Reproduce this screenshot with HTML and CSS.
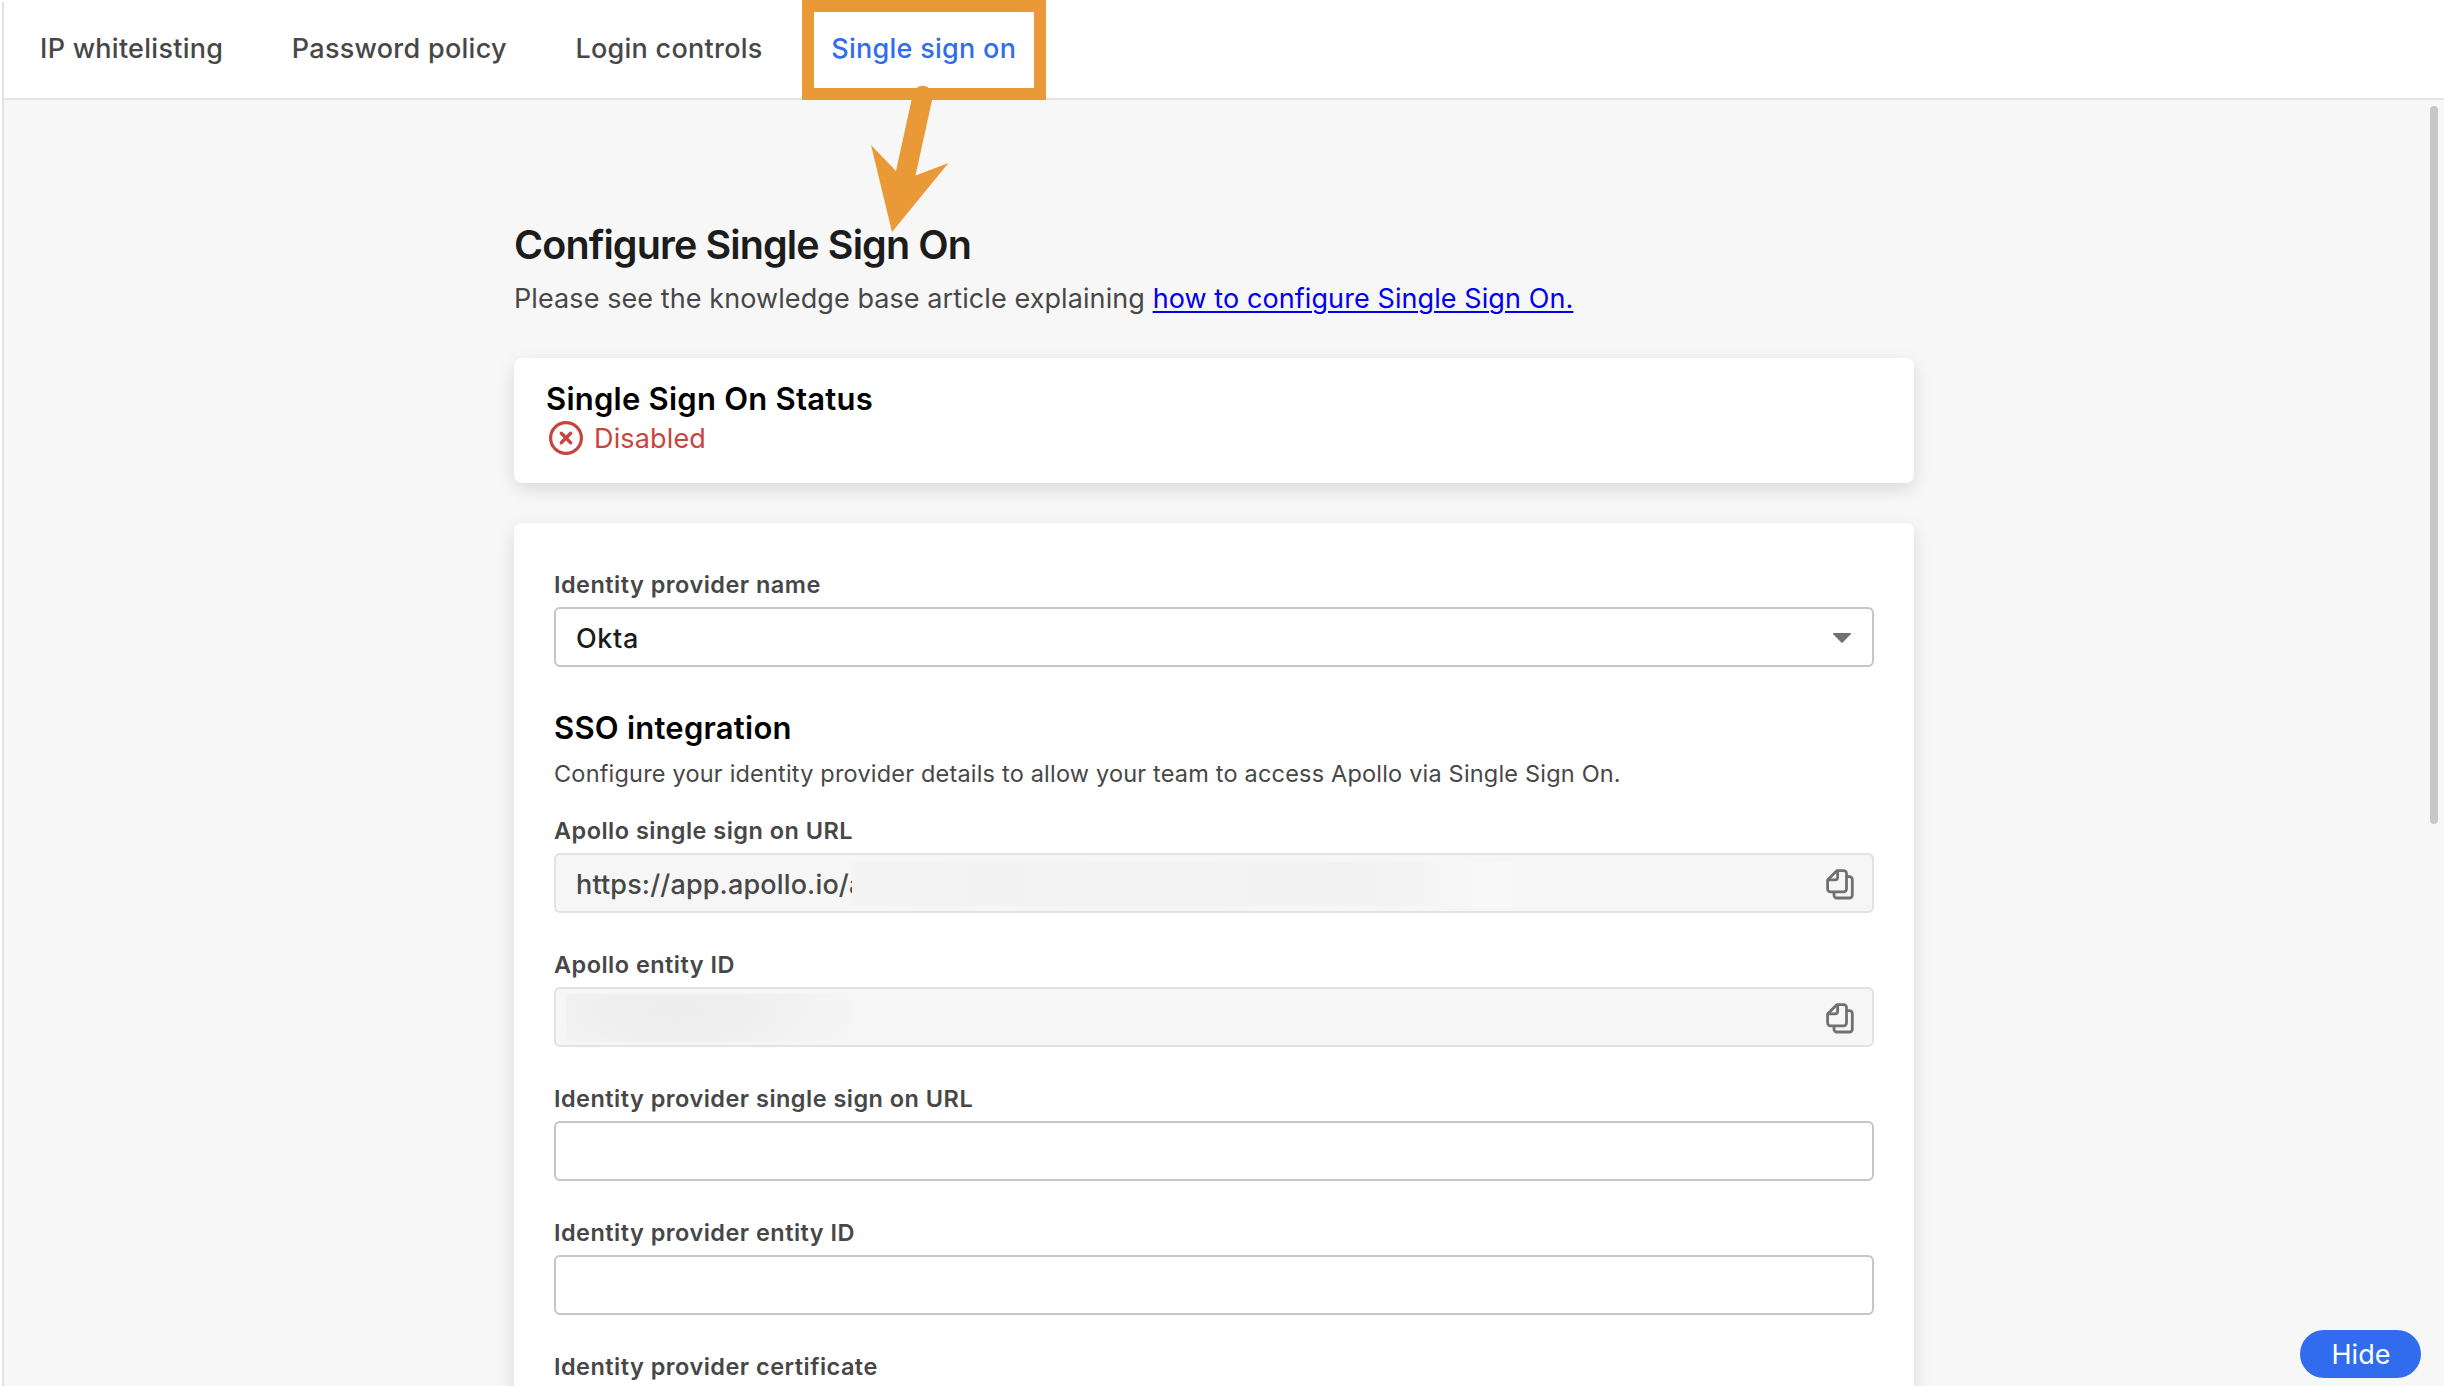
FILE: index.html
```html
<!DOCTYPE html>
<html lang="en">
<head>
    <meta charset="UTF-8">
    <meta name="viewport" content="width=device-width, initial-scale=1.0">
    <title>Single sign on</title>
    <link rel="stylesheet" href="styles.css">
</head>
<body>
    <div class="page">
        <nav class="tabs">
            <a class="tab">IP whitelisting</a>
            <a class="tab">Password policy</a>
            <a class="tab">Login controls</a>
            <a class="tab active">Single sign on</a>
        </nav>

        <main class="content">
            <h1>Configure Single Sign On</h1>
            <p class="intro">Please see the knowledge base article explaining <a href="#">how to configure Single Sign On.</a></p>

            <section class="card status-card">
                <h2>Single Sign On Status</h2>
                <div class="status">
                    <svg width="34" height="34" viewBox="0 0 34 34" fill="none" stroke="currentColor" stroke-linecap="round">
                        <circle cx="17" cy="17" r="15.4" stroke-width="3.2"/>
                        <path d="M12.3 12.3l9.4 9.4M21.7 12.3l-9.4 9.4" stroke-width="3.4"/>
                    </svg>
                    <span>Disabled</span>
                </div>
            </section>

            <section class="card form-card">
                <div class="field">
                    <label>Identity provider name</label>
                    <div class="input select">
                        <span>Okta</span>
                        <svg class="caret" width="18" height="10" viewBox="0 0 18 10"><path d="M0 0h18v1L10 9.3q-1 1-2 0L0 1z" fill="#717171"/></svg>
                    </div>
                </div>

                <h2 class="sso-title">SSO integration</h2>
                <p class="desc">Configure your identity provider details to allow your team to access Apollo via Single Sign On.</p>

                <div class="field">
                    <label>Apollo single sign on URL</label>
                    <div class="input readonly">
                        <span class="url">https://app.apollo.io/a</span>
                        <span class="redacted-url"></span>
                        <svg class="copy" width="28" height="31" viewBox="0 0 28 31" fill="none" stroke="#717171" stroke-width="2.8" stroke-linejoin="round">
                            <path d="M11 1.6h6.7a2.8 2.8 0 0 1 2.8 2.8v15.7a2.8 2.8 0 0 1-2.8 2.8H4.4a2.8 2.8 0 0 1-2.8-2.8V11z"/>
                            <path d="M11.6 1.6v6.7a2.5 2.5 0 0 1-2.5 2.5H1.6"/>
                            <path d="M20.5 7.6h3a2.8 2.8 0 0 1 2.8 2.8v15.8a2.8 2.8 0 0 1-2.8 2.8H10.8A2.8 2.8 0 0 1 8 26.2v-3.3"/>
                        </svg>
                    </div>
                </div>

                <div class="field">
                    <label>Apollo entity ID</label>
                    <div class="input readonly">
                        <span class="redacted-id"></span>
                        <svg class="copy" width="28" height="31" viewBox="0 0 28 31" fill="none" stroke="#717171" stroke-width="2.8" stroke-linejoin="round">
                            <path d="M11 1.6h6.7a2.8 2.8 0 0 1 2.8 2.8v15.7a2.8 2.8 0 0 1-2.8 2.8H4.4a2.8 2.8 0 0 1-2.8-2.8V11z"/>
                            <path d="M11.6 1.6v6.7a2.5 2.5 0 0 1-2.5 2.5H1.6"/>
                            <path d="M20.5 7.6h3a2.8 2.8 0 0 1 2.8 2.8v15.8a2.8 2.8 0 0 1-2.8 2.8H10.8A2.8 2.8 0 0 1 8 26.2v-3.3"/>
                        </svg>
                    </div>
                </div>

                <div class="field">
                    <label>Identity provider single sign on URL</label>
                    <div class="input"></div>
                </div>

                <div class="field">
                    <label>Identity provider entity ID</label>
                    <div class="input"></div>
                </div>

                <div class="field">
                    <label>Identity provider certificate</label>
                    <div class="input"></div>
                </div>
            </section>
        </main>
    </div>

    <!-- callout on the active tab -->
    <div class="highlight"></div>
    <svg class="arrow" width="80" height="150" viewBox="0 0 80 150">
        <path d="M42.4 14A10.3 10.3 0 0 1 63 14L45.5 93.5 78.5 81 22 150 1 63l25 26z" fill="#e99a36"/>
    </svg>

    <div class="scrollbar"></div>
    <button class="hide-btn">Hide</button>
</body>
</html>
```
FILE: styles.css
```css
* {
    box-sizing: border-box;
}
body {
    margin: 0;
    height: 1386px;
    overflow: hidden;
    position: relative;
    background-color: #fff;
    font-family: Inter, "Open Sans", sans-serif;
    font-size: 27px;
    color: #474747;
}
h1, h2, p {
    margin: 0;
}
.page {
    margin: 2px 0 0 2px;
    height: 1384px;
    overflow: hidden;
    border-left: 2px solid #e3e3e3;
    background-color: #f7f7f7;
}
.tabs {
    display: flex;
    gap: 68.6px;
    height: 98px;
    padding: 30px 0 0 36px;
    background-color: #fff;
    border-bottom: 2px solid #e3e3e3;
    line-height: 34px;
    letter-spacing: 0.27px;
    font-weight: 500;
    white-space: nowrap;
}
.tab.active {
    color: #326cee;
}
.content {
    width: 1400px;
    margin: 0 0 0 510px;
    padding-top: 121px;
}
h1 {
    font-size: 39.5px;
    line-height: 48px;
    letter-spacing: -0.88px;
    font-weight: 600;
    color: #1c1c1c;
}
.intro {
    margin-top: 13px;
    line-height: 34px;
    letter-spacing: 0.085px;
    white-space: nowrap;
}
.intro a {
    color: #0000ee;
    text-decoration-thickness: 2px;
    text-underline-offset: 3px;
}
.card {
    background-color: #fff;
    border-radius: 8px;
    box-shadow: 0 6px 18px rgba(0, 0, 0, 0.12);
}
.status-card {
    margin-top: 42px;
    height: 125px;
    padding: 21px 32px;
}
h2 {
    font-size: 31px;
    line-height: 40px;
    letter-spacing: 0.24px;
    font-weight: 600;
    color: #000;
}
.status {
    display: flex;
    align-items: center;
    gap: 11px;
    margin: 2px 0 0 3px;
    height: 34px;
    letter-spacing: 0.15px;
    color: #c8453e;
}
.form-card {
    margin-top: 40px;
    height: 1000px;
    padding: 45px 40px;
}
.field {
    margin-bottom: 35px;
}
label {
    display: block;
    height: 39px;
    padding-top: 1px;
    font-size: 23.5px;
    line-height: 32px;
    letter-spacing: 0.47px;
    font-weight: 600;
}
.input {
    display: flex;
    align-items: center;
    height: 60px;
    padding: 2px 18px 0 20px;
    border: 2px solid #c6c6c6;
    border-radius: 6px;
}
.select {
    justify-content: space-between;
    padding-right: 21px;
    letter-spacing: 0.6px;
    font-weight: 500;
    color: #1c1c1c;
}
.readonly {
    background-color: #f6f6f6;
    border-color: #e2e2e2;
    letter-spacing: 0.15px;
    font-weight: 500;
}
.sso-title {
    margin-top: 41px;
}
.desc {
    margin: 10px 0 24px;
    font-size: 23.5px;
    line-height: 32px;
    letter-spacing: 0.19px;
    white-space: nowrap;
}
.url {
    width: 276px;
    white-space: nowrap;
}
.copy {
    margin-left: auto;
}
.redacted-url {
    width: 660px;
    height: 44px;
    background: linear-gradient(90deg, #f4f4f4, #f2f2f2 20%, #f3f3f3 50%, #f1f1f1 75%, #f3f3f3 83%, #f9f9f9 97%);
}
.redacted-id {
    width: 286px;
    height: 48px;
    margin-left: -10px;
    background: radial-gradient(ellipse 190px 70px at 110px 16px, #ededed, #f0f0f0 50%, #f6f6f6);
}
.highlight {
    position: absolute;
    left: 802px;
    top: 0;
    width: 244px;
    height: 100px;
    border: 12px solid #e99a36;
}
.arrow {
    position: absolute;
    left: 870px;
    top: 82px;
}
.scrollbar {
    position: absolute;
    left: 2430px;
    top: 106px;
    width: 8px;
    height: 718px;
    border-radius: 4px;
    background-color: #c7c7c7;
}
.hide-btn {
    position: absolute;
    left: 2300px;
    top: 1330px;
    width: 121px;
    height: 48px;
    padding: 0 0 0 1px;
    border: none;
    border-radius: 24px;
    background-color: #326cee;
    color: #fff;
    font: 400 27px Inter, "Open Sans", sans-serif;
}
```
